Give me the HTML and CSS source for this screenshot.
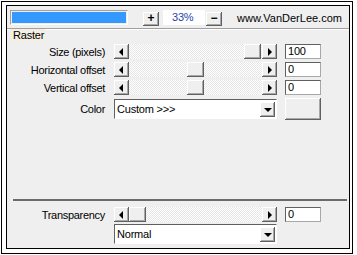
FILE: index.html
```html
<!DOCTYPE html>
<html lang="en">

<head>
    <meta charset="UTF-8" />
    <title>Raster</title>
    <link rel="stylesheet" href="styles.css">
</head>

<body>
    <div class="frame">
        <div class="panel">
            <div class="topbar">
                <div class="progress"><div class="fill"></div></div>
                <span class="btn step plus">+</span>
                <span class="zoom">33%</span>
                <span class="btn step minus">&minus;</span>
                <span class="site">www.VanDerLee.com</span>
            </div>
            <div class="etch"></div>
            <div class="group-title">Raster</div>

            <div class="rows">
                <span class="label">Size (pixels)</span>
                <div class="scroll">
                    <span class="btn sbtn"><i class="arrow left"></i></span>
                    <div class="track"><span class="btn thumb" style="margin-left: 115px"></span></div>
                    <span class="btn sbtn"><i class="arrow right"></i></span>
                </div>
                <span class="field">100</span>

                <span class="label">Horizontal offset</span>
                <div class="scroll">
                    <span class="btn sbtn"><i class="arrow left"></i></span>
                    <div class="track"><span class="btn thumb" style="margin-left: 58px"></span></div>
                    <span class="btn sbtn"><i class="arrow right"></i></span>
                </div>
                <span class="field">0</span>

                <span class="label">Vertical offset</span>
                <div class="scroll">
                    <span class="btn sbtn"><i class="arrow left"></i></span>
                    <div class="track"><span class="btn thumb" style="margin-left: 58px"></span></div>
                    <span class="btn sbtn"><i class="arrow right"></i></span>
                </div>
                <span class="field">0</span>

                <span class="label">Color</span>
                <div class="combo">
                    <span class="combo-text">Custom &gt;&gt;&gt;</span>
                    <span class="btn dbtn"><i class="arrow down"></i></span>
                </div>
                <span class="btn swatch"></span>
            </div>

            <div class="spacer"></div>

            <div class="rule"></div>
            <div class="rows bottom">
                <span class="label">Transparency</span>
                <div class="scroll">
                    <span class="btn sbtn"><i class="arrow left"></i></span>
                    <div class="track"><span class="btn thumb" style="margin-left: 0"></span></div>
                    <span class="btn sbtn"><i class="arrow right"></i></span>
                </div>
                <span class="field">0</span>

                <span></span>
                <div class="combo">
                    <span class="combo-text">Normal</span>
                    <span class="btn dbtn"><i class="arrow down"></i></span>
                </div>
                <span></span>
            </div>
        </div>
    </div>
</body>

</html>
```

FILE: styles.css
```css
* {
    box-sizing: border-box;
    margin: 0;
    padding: 0;
}

body {
    background: #fff;
    font-family: 'Liberation Sans', Arial, sans-serif;
    font-size: 11px;
    color: #000;
}

.frame {
    margin: 1px 0 0 1px;
    width: 352px;
    height: 253px;
    border: 1px solid #000;
    padding: 3px 2px 4px 4px;
}

.panel {
    height: 100%;
    border: 1px solid #000;
    background: #efefef;
    display: flex;
    flex-direction: column;
}

/* top bar */
.topbar {
    display: flex;
    align-items: flex-start;
    height: 22px;
    padding: 4px 0 0 3px;
}

.progress {
    width: 118px;
    height: 15px;
    border: 1px solid;
    border-color: #a0a0a0 #fff #fff #a0a0a0;
    padding: 1px;
}

.progress .fill {
    height: 100%;
    background: #3399ff;
}

.btn {
    display: block;
    background: #efefef;
    box-shadow: inset -1px -1px #606060, inset 1px 1px #fff, inset -2px -2px #a8a8a8;
}

.step {
    width: 16px;
    height: 14px;
    margin-top: 2px;
    font-weight: bold;
    font-size: 12px;
    line-height: 13px;
    text-align: center;
}

.plus {
    margin-left: 15px;
}

.zoom {
    width: 42px;
    height: 15px;
    margin: 0 1px 0 4px;
    background: #fff;
    color: #1f3fae;
    line-height: 15px;
    padding-left: 9px;
    letter-spacing: -0.2px;
}

.site {
    margin-left: 15px;
    line-height: 15px;
    margin-top: 1px;
}

.etch {
    border-top: 1px solid #a0a0a0;
    border-bottom: 1px solid #fff;
}

.group-title {
    align-self: flex-start;
    margin: -1px 0 0 3px;
    height: 12px;
    line-height: 12px;
    padding: 0 1px 0 3px;
    background: #f4efe2;
    letter-spacing: -0.2px;
}

/* rows */
.rows {
    display: grid;
    grid-template-columns: 99px 163px 36px;
    column-gap: 8px;
    row-gap: 3px;
    align-items: center;
    margin-top: 3px;
}

.label {
    text-align: right;
    padding-right: 1px;
    letter-spacing: -0.3px;
}

.scroll {
    display: flex;
    height: 15px;
}

.sbtn {
    width: 15px;
    height: 15px;
    display: flex;
    align-items: center;
    justify-content: center;
}

.track {
    flex: 1;
    background: repeating-conic-gradient(#e6e6e6 0 25%, #fff 0 50%) 0 0/2px 2px;
}

.thumb {
    width: 17px;
    height: 15px;
}

.arrow {
    display: block;
    width: 0;
    height: 0;
    border: 4px solid transparent;
}

.arrow.left {
    border-right-color: #000;
    border-left-width: 0;
    margin-right: 1px;
}

.arrow.right {
    border-left-color: #000;
    border-right-width: 0;
    margin-left: 1px;
}

.arrow.down {
    border-top-color: #000;
    border-bottom-width: 0;
    margin-top: 1px;
}

.field {
    height: 15px;
    border: 1px solid;
    border-color: #606060 #a8a8a8 #a8a8a8 #606060;
    background: #fff;
    line-height: 13px;
    padding-left: 2px;
    letter-spacing: -0.2px;
}

.combo {
    display: flex;
    height: 20px;
    border: 1px solid;
    border-color: #606060 #fff #fff #606060;
    background: #fff;
    padding: 2px 1px 2px 2px;
}

.combo-text {
    flex: 1;
    line-height: 15px;
    letter-spacing: -0.2px;
}

.dbtn {
    width: 15px;
    height: 15px;
    display: flex;
    align-items: center;
    justify-content: center;
}

.swatch {
    height: 22px;
}

.spacer {
    flex: 1;
}

.rule {
    height: 2px;
    margin: 0 2px 0 6px;
    background: #6a6a6a;
}

.rows.bottom {
    margin: 6px 0 4px;
    row-gap: 2px;
}
```
